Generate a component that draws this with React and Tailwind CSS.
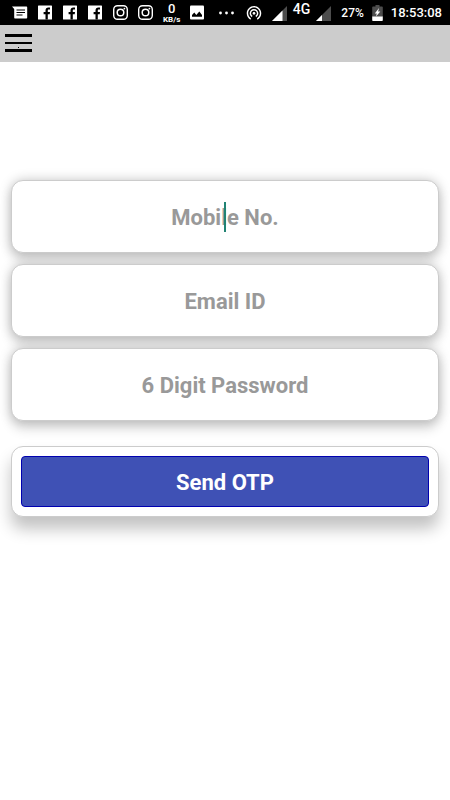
import { useState } from "react";

function MessageIcon() {
  return (
    <svg className="w-4 h-4 shrink-0" viewBox="0 0 16 16" fill="none">
      <path d="M0 1.500h14.200c.6 0 1 .4 1 1v10c0 .6-.4 1-1 1H3.200c-.6 0-1-.4-1-1V4z" fill="#fff" />
      <path d="M4.500 5h8.500M4.500 7.500h8.500M4.500 10h6" stroke="#000" strokeWidth="1.200" />
    </svg>
  );
}

function FacebookIcon() {
  return (
    <svg className="w-[15px] h-[15px] shrink-0" viewBox="0 0 15 15">
      <rect x="0" y=".5" width="14" height="14" rx=".6" fill="#fff" />
      <path
        d="M7.500 14.500V9.200H5.600V6.900h1.900V5.400c0-1.900 1.100-2.900 2.800-2.900h1.700v2.100h-1.200c-.8 0-1 .4-1 1v1.300h2.200l-.3 2.300H9.800v5.300z"
        fill="#000"
      />
    </svg>
  );
}

function InstagramIcon() {
  return (
    <svg className="w-[15px] h-[15px] shrink-0" viewBox="0 0 15 15" fill="none" stroke="#fff">
      <rect x=".7" y=".7" width="13.600" height="13.600" rx="3.800" strokeWidth="1.400" />
      <circle cx="7.500" cy="7.500" r="3.300" strokeWidth="1.500" />
      <circle cx="11.400" cy="3.600" r=".9" fill="#fff" stroke="none" />
    </svg>
  );
}

function PictureIcon() {
  return (
    <svg className="w-[15px] h-[15px] shrink-0" viewBox="0 0 15 15">
      <rect x="0" y=".5" width="14" height="14" rx="1" fill="#fff" />
      <path d="M2 11.800V10l2.300-2.500 2 2.500 3-3.500L12 10v1.800z" fill="#000" />
    </svg>
  );
}

function DotsIcon() {
  return (
    <svg className="w-4 h-4 shrink-0" viewBox="0 0 16 16" fill="#fff">
      <circle cx="1.500" cy="8" r="1.400" />
      <circle cx="7.500" cy="8" r="1.400" />
      <circle cx="13.500" cy="8" r="1.400" />
    </svg>
  );
}

function HotspotIcon() {
  return (
    <svg className="w-4 h-4 shrink-0" viewBox="1 1.500 22 22" fill="#fff">
      <path d="M12 11c-1.100 0-2 .9-2 2s.9 2 2 2 2-.9 2-2-.9-2-2-2zm6 2c0-3.310-2.690-6-6-6s-6 2.690-6 6c0 2.220 1.210 4.150 3 5.190l1-1.740c-1.190-.7-2-1.970-2-3.450 0-2.210 1.790-4 4-4s4 1.790 4 4c0 1.480-.81 2.750-2 3.450l1 1.740c1.790-1.040 3-2.970 3-5.190zM12 3C6.480 3 2 7.480 2 13c0 3.700 2.010 6.920 4.990 8.650l1-1.730C5.610 18.530 4 15.960 4 13c0-4.420 3.580-8 8-8s8 3.580 8 8c0 2.960-1.610 5.530-4 6.920l1 1.730c2.990-1.730 5-4.950 5-8.650 0-5.520-4.480-10-10-10z" />
    </svg>
  );
}

function SignalIcon({ level }) {
  const x = level * 15;
  return (
    <svg className="mt-[2px] w-[15px] h-[15px] shrink-0" viewBox="0 0 15 15">
      <path d="M0 15L15 0v15z" fill="#4d4d4d" />
      <path d={`M0 15L${x} ${15 - x}V15z`} fill="#fff" />
    </svg>
  );
}

function BatteryIcon() {
  return (
    <svg className="w-[11px] h-4 shrink-0" viewBox="0 0 11 16">
      <path d="M3.500 0h4v1.500H10c.5 0 .8.300.8.800V12H.2V2.300c0-.5.300-.8.800-.8h2.500z" fill="#4d4d4d" />
      <path d="M.2 11.500h10.600v3.700c0 .5-.3.800-.8.800H1c-.5 0-.8-.3-.8-.8z" fill="#fff" />
      <path d="M7 3L2.800 8.600h2L4 11.500l4.300-5H6.100z" fill="#fff" />
    </svg>
  );
}

function StatusBar() {
  return (
    <div className="flex h-[25px] items-center justify-between bg-black pl-3 pr-2 font-medium text-white">
      <div className="flex items-center gap-[10px]">
        <MessageIcon />
        <FacebookIcon />
        <FacebookIcon />
        <FacebookIcon />
        <InstagramIcon />
        <InstagramIcon />
        <div className="flex flex-col items-center">
          <span className="text-[13px] leading-[13px]">0</span>
          <span className="text-[8px] leading-[9px] font-bold">KB/s</span>
        </div>
        <PictureIcon />
        <span className="pl-1">
          <DotsIcon />
        </span>
      </div>
      <div className="flex items-center">
        <HotspotIcon />
        <div className="flex items-center gap-[6px] pl-[10px]">
          <SignalIcon level={0.7} />
          <span className="pb-2 text-sm leading-4">4G</span>
          <SignalIcon level={0.4} />
        </div>
        <span className="pl-[10px] text-xs">27%</span>
        <span className="pl-2">
          <BatteryIcon />
        </span>
        <span className="pl-2 text-[13px]">18:53:08</span>
      </div>
    </div>
  );
}

const cardClass = "rounded-xl border border-[#ccc] bg-white";

function Field({ label, type, value, onChange, active }) {
  return (
    <div className="relative">
      <input
        type={type}
        aria-label={label}
        placeholder={label}
        value={value}
        onChange={(e) => onChange(e.target.value)}
        className={`block h-[73px] w-full pt-[2px] text-center text-[22px] font-bold text-gray-800 outline-none placeholder:text-[#999] shadow-[0_0_12px_0_rgba(0,0,0,0.22),0_8px_12px_0_rgba(0,0,0,0.14)] ${cardClass}`}
      />
      {active && !value && (
        <span className="pointer-events-none absolute inset-0 m-auto h-[30px] w-[2px] bg-[#218373]" />
      )}
    </div>
  );
}

export default function App() {
  const [mobile, setMobile] = useState("");
  const [email, setEmail] = useState("");
  const [password, setPassword] = useState("");

  return (
    <div className="min-h-screen bg-white font-['Roboto',sans-serif]">
      <StatusBar />

      {/* HEADER */}
      <header className="flex h-[37px] items-center bg-[#ccc] px-1">
        <button type="button" aria-label="Menu">
          <svg className="w-[29px] h-[19px]" viewBox="0 0 29 19" fill="#000">
            <rect x="1" y="0" width="27" height="3" />
            <rect x="1" y="8" width="27" height="2" />
            <rect x="1" y="15" width="27" height="3" />
            <rect x="14" y="13" width="1" height="1" />
          </svg>
        </button>
      </header>

      {/* SIGN UP FORM */}
      <form className="px-[11px] pt-[118px]" onSubmit={(e) => e.preventDefault()}>
        <div className="space-y-[11px]">
          <Field label="Mobile No." type="tel" value={mobile} onChange={setMobile} active />
          <Field label="Email ID" type="email" value={email} onChange={setEmail} />
          <Field label="6 Digit Password" type="password" value={password} onChange={setPassword} />
        </div>

        <div className={`mt-[25px] p-[9px] shadow-[0_12px_16px_0_rgba(0,0,0,0.24)] ${cardClass}`}>
          <button
            type="submit"
            className="block h-[51px] w-full rounded border border-[#0000b0] bg-[#3f51b5] pt-[2px] text-[22px] font-bold text-white"
          >
            Send OTP
          </button>
        </div>
      </form>
    </div>
  );
}
